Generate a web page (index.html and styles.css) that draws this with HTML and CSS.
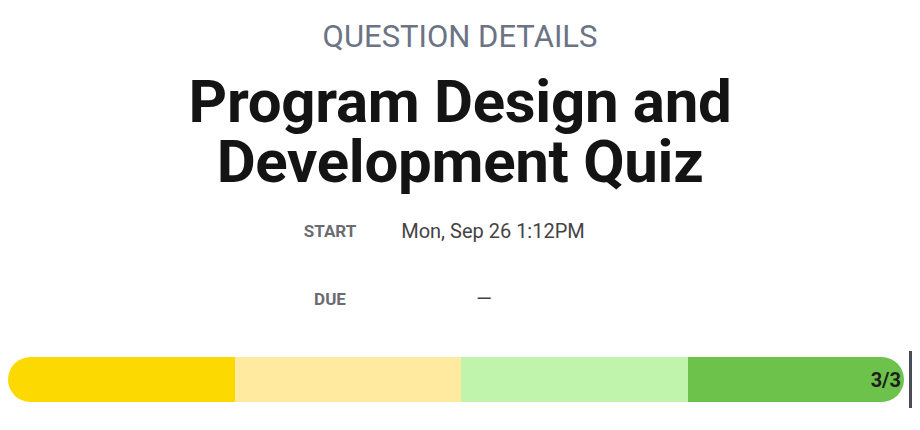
FILE: index.html
```html
<!DOCTYPE html>
<html>
<head>
<meta charset="utf-8">
<link rel="stylesheet" href="styles.css">
</head>
<body>
<div class="page">
  <div class="eyebrow">QUESTION DETAILS</div>
  <h1 class="title">Program Design and<br>Development Quiz</h1>
  <div class="meta">
    <div class="label">START</div>
    <div class="value">Mon, Sep 26 1:12PM</div>
    <div class="label">DUE</div>
    <div class="value dash">—</div>
  </div>
  <div class="progress">
    <div class="bar">
      <div class="seg s1"></div>
      <div class="seg s2"></div>
      <div class="seg s3"></div>
      <div class="seg s4"><span class="count">3/3</span></div>
    </div>
    <div class="marker"></div>
  </div>
</div>
</body>
</html>
```
FILE: styles.css
```css
html, body {
  margin: 0;
  padding: 0;
  background: #ffffff;
}
body {
  font-family: Roboto, "Liberation Sans", sans-serif;
}
.page {
  padding: 0 8px;
  display: flex;
  flex-direction: column;
  align-items: stretch;
}
.eyebrow {
  text-align: center;
  font-size: 31px;
  font-weight: 400;
  color: #6b7385;
  line-height: 36px;
  margin-top: 19px;
}
.title {
  margin: 17px 0 0 0;
  text-align: center;
  font-size: 60px;
  line-height: 60px;
  font-weight: 700;
  color: #141414;
  letter-spacing: -0.3px;
}
.meta {
  display: grid;
  grid-template-columns: 120px 206px;
  grid-auto-rows: 68px;
  margin: 5px 0 0 262px;
  align-items: center;
}
.label {
  text-align: center;
  font-size: 17px;
  font-weight: 700;
  color: #6b6b73;
}
.value {
  text-align: center;
  font-size: 20px;
  color: #444444;
}
.dash {
  padding-right: 18px;
}
.progress {
  display: flex;
  align-items: center;
  margin-top: 18px;
}
.bar {
  display: flex;
  width: 897px;
  height: 45px;
  border-radius: 23px;
  overflow: hidden;
}
.seg {
  height: 100%;
}
.s1 { width: 227px; background: #fcd900; }
.s2 { width: 226px; background: #ffeaa0; }
.s3 { width: 227px; background: #c0f4ad; }
.s4 {
  flex: 1;
  background: #6cc24a;
  display: flex;
  align-items: center;
  justify-content: flex-end;
  padding-right: 3px;
}
.count {
  font-size: 20px;
  font-weight: 700;
  color: #1e1e1e;
}
.marker {
  width: 3px;
  height: 57px;
  background: #4b4b55;
  margin-left: 5px;
}
```
